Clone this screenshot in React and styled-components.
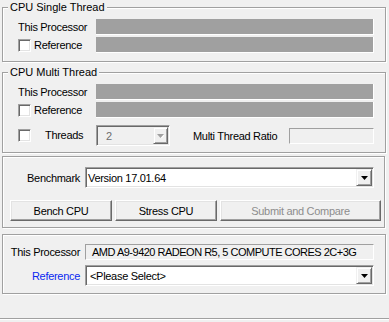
import React from "react";
import styled, { createGlobalStyle } from "styled-components";

const Global = createGlobalStyle`
  html, body { margin: 0; padding: 0; background: #f0f0f0; }
  body {
    font-family: "Liberation Sans", Arial, sans-serif;
    font-size: 11px;
    letter-spacing: -0.3px;
    color: #000;
  }
  * { box-sizing: border-box; }
`;

const Window = styled.div`
  width: 389px;
  height: 322px;
  overflow: hidden;
  background: #f0f0f0;
  display: flex;
  flex-direction: column;
`;

const Content = styled.div`
  padding: 7px 3px 0 2px;
  display: flex;
  flex-direction: column;
`;

const Group = styled.div`
  position: relative;
  margin-top: ${(p) => p.$mt || 0}px;
  margin-right: ${(p) => p.$mr || 0}px;
  padding: ${(p) => p.$pad};
  border: 1px solid #a0a0a0;
  box-shadow: inset 1px 1px #fff, 1px 1px #fff;
  display: flex;
  flex-direction: column;
`;

const Title = styled.div`
  position: absolute;
  top: -7px;
  left: 5px;
  padding: 0 2px;
  line-height: 13px;
  letter-spacing: 0;
  background: #f0f0f0;
  white-space: nowrap;
`;

const BarRow = styled.div`
  display: grid;
  grid-template-columns: 78px 1fr;
  align-items: center;
  height: 16px;
  margin-top: ${(p) => p.$mt || 0}px;
`;

const Label = styled.span`
  white-space: nowrap;
  line-height: 13px;
`;

const CheckLabel = styled.label`
  display: flex;
  align-items: center;
  white-space: nowrap;
  line-height: 13px;
`;

const CheckBox = styled.span`
  width: 13px;
  height: 13px;
  flex: none;
  background: #fff;
  border: 1px solid;
  border-color: #a0a0a0 #fff #fff #a0a0a0;
  box-shadow: inset 1px 1px #696969, inset -1px -1px #e3e3e3;
  margin-right: ${(p) => p.$gap}px;
`;

const Bar = styled.div`
  height: 16px;
  background: #a0a0a0;
  border-right: 1px solid #fff;
  border-bottom: 1px solid #fff;
`;

const ThreadsRow = styled.div`
  display: flex;
  align-items: center;
  margin-top: 7px;
  height: 21px;
`;

const ThreadsCell = styled.div`
  width: 78px;
  display: flex;
  align-items: center;
`;

const Combo = styled.div`
  width: ${(p) => p.$w}px;
  height: 21px;
  display: flex;
  align-items: stretch;
  background: ${(p) => (p.$disabled ? "#f0f0f0" : "#fff")};
  border: 1px solid;
  border-color: #a0a0a0 #fff #fff #a0a0a0;
  box-shadow: inset 1px 1px #696969, inset -1px -1px #e3e3e3;
  padding: 1px;
`;

const ComboText = styled.span`
  flex: 1;
  display: flex;
  align-items: center;
  padding-left: ${(p) => p.$pl}px;
  color: ${(p) => (p.$disabled ? "#6d6d6d" : "#000")};
  white-space: nowrap;
  overflow: hidden;
`;

const ArrowButton = styled.span`
  width: ${(p) => p.$w || 16}px;
  flex: none;
  display: flex;
  align-items: center;
  justify-content: center;
  background: #f0f0f0;
  border: 1px solid;
  border-color: #f0f0f0 #696969 #696969 #f0f0f0;
  box-shadow: inset 1px 1px #fff, inset -1px -1px #a0a0a0;
`;

const RatioLabel = styled.span`
  margin-left: 23px;
  white-space: nowrap;
`;

const ReadBox = styled.div`
  width: ${(p) => p.$w}px;
  height: 16px;
  margin-left: auto;
  background: #f0f0f0;
  border: 1px solid;
  border-color: #a0a0a0 #fff #fff #a0a0a0;
  padding-left: ${(p) => p.$pl || 0}px;
  display: flex;
  align-items: center;
  white-space: nowrap;
  overflow: hidden;
  letter-spacing: ${(p) => p.$ls || "-0.3px"};
`;

const FormRow = styled.div`
  display: grid;
  grid-template-columns: 82px 289px;
  align-items: center;
  margin-top: ${(p) => p.$mt || 0}px;
`;

const FormLabel = styled.span`
  text-align: right;
  padding-right: 5px;
  white-space: nowrap;
  color: ${(p) => p.$color || "#000"};
`;

const ButtonRow = styled.div`
  display: flex;
  gap: 3px;
  padding-left: 7px;
  margin-top: 12px;
`;

const Button = styled.div`
  width: ${(p) => p.$w}px;
  height: 21px;
  display: flex;
  align-items: center;
  justify-content: center;
  background: #f0f0f0;
  border: 1px solid;
  border-color: #fff #696969 #696969 #fff;
  box-shadow: inset -1px -1px #a0a0a0, inset 1px 1px #e3e3e3;
  color: ${(p) => (p.$disabled ? "#8d8d8d" : "#000")};
  white-space: nowrap;
`;

const Footer = styled.div`
  margin-top: 24px;
  flex: 1;
  border-top: 1px solid #a0a0a0;
  box-shadow: inset 0 1px #fff;
`;

const Arrow = ({ disabled }) => (
  <svg width="7" height="4" viewBox="0 0 7 4" style={{ display: "block" }}>
    {disabled && <path d="M1 1h7L4.5 4.5z" fill="#fff" />}
    <path d="M0 0h7L3.5 4z" fill={disabled ? "#a0a0a0" : "#000"} />
  </svg>
);

const ComboBox = ({ w, text, pl, disabled, bw }) => (
  <Combo $w={w} $disabled={disabled}>
    <ComboText $pl={pl} $disabled={disabled}>{text}</ComboText>
    <ArrowButton $w={bw}>
      <Arrow disabled={disabled} />
    </ArrowButton>
  </Combo>
);

export default function App() {
  return (
    <>
      <Global />
      <Window>
        <Content>
          <Group $pad="11px 11px 8px 15px">
            <Title>CPU Single Thread</Title>
            <BarRow>
              <Label>This Processor</Label>
              <Bar />
            </BarRow>
            <BarRow $mt={2}>
              <CheckLabel>
                <CheckBox $gap={3} />
                Reference
              </CheckLabel>
              <Bar />
            </BarRow>
          </Group>

          <Group $mt={10} $pad="11px 11px 6px 15px">
            <Title>CPU Multi Thread</Title>
            <BarRow>
              <Label>This Processor</Label>
              <Bar />
            </BarRow>
            <BarRow $mt={2}>
              <CheckLabel>
                <CheckBox $gap={3} />
                Reference
              </CheckLabel>
              <Bar />
            </BarRow>
            <ThreadsRow>
              <ThreadsCell>
                <CheckLabel>
                  <CheckBox $gap={14} />
                  Threads
                </CheckLabel>
              </ThreadsCell>
              <ComboBox w={74} text="2" pl={8} disabled bw={15} />
              <RatioLabel>Multi Thread Ratio</RatioLabel>
              <ReadBox $w={85} />
            </ThreadsRow>
          </Group>

          <Group $mt={3} $mr={1} $pad="10px 0 6px 0">
            <FormRow>
              <FormLabel>Benchmark</FormLabel>
              <ComboBox w={289} text="Version 17.01.64" pl={1} />
            </FormRow>
            <ButtonRow>
              <Button $w={102}>Bench CPU</Button>
              <Button $w={102}>Stress CPU</Button>
              <Button $w={161} $disabled>
                Submit and Compare
              </Button>
            </ButtonRow>
          </Group>

          <Group $mt={6} $pad="9px 0 7px 0">
            <FormRow>
              <FormLabel>This Processor</FormLabel>
              <ReadBox $w={289} $pl={6} $ls="-0.5px">
                AMD A9-9420 RADEON R5, 5 COMPUTE CORES 2C+3G
              </ReadBox>
            </FormRow>
            <FormRow $mt={5}>
              <FormLabel $color="#0a28f0">Reference</FormLabel>
              <ComboBox w={289} text="<Please Select>" pl={3} />
            </FormRow>
          </Group>
        </Content>
        <Footer />
      </Window>
    </>
  );
}
